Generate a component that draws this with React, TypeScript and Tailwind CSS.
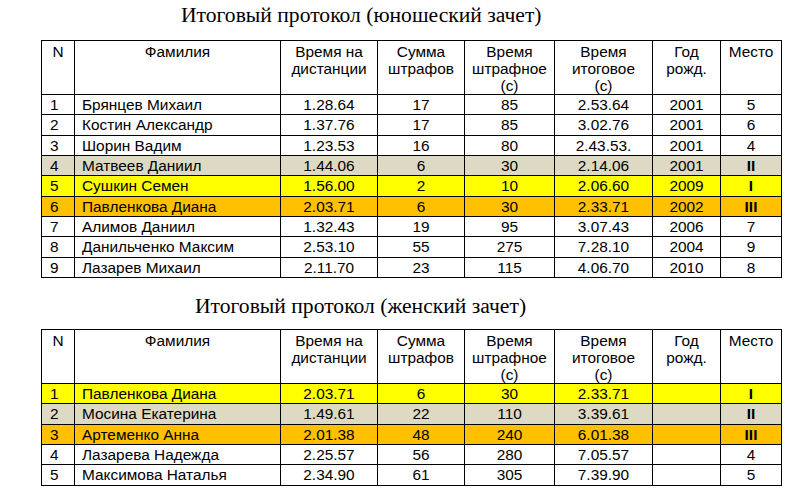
import React from "react";

type Row = {
  n: string;
  name: string;
  t: string;
  s: string;
  p: string;
  f: string;
  y: string;
  m: string;
  bg?: string;
  bold?: boolean;
};

const GRAY = "bg-[#ddd9c3]";
const YEL = "bg-[#ffff00]";
const ORG = "bg-[#ffc000]";

const boys: Row[] = [
  { n: "1", name: "Брянцев Михаил", t: "1.28.64", s: "17", p: "85", f: "2.53.64", y: "2001", m: "5" },
  { n: "2", name: "Костин Александр", t: "1.37.76", s: "17", p: "85", f: "3.02.76", y: "2001", m: "6" },
  { n: "3", name: "Шорин Вадим", t: "1.23.53", s: "16", p: "80", f: "2.43.53.", y: "2001", m: "4" },
  { n: "4", name: "Матвеев Даниил", t: "1.44.06", s: "6", p: "30", f: "2.14.06", y: "2001", m: "II", bg: GRAY, bold: true },
  { n: "5", name: "Сушкин Семен", t: "1.56.00", s: "2", p: "10", f: "2.06.60", y: "2009", m: "I", bg: YEL, bold: true },
  { n: "6", name: "Павленкова Диана", t: "2.03.71", s: "6", p: "30", f: "2.33.71", y: "2002", m: "III", bg: ORG, bold: true },
  { n: "7", name: "Алимов Даниил", t: "1.32.43", s: "19", p: "95", f: "3.07.43", y: "2006", m: "7" },
  { n: "8", name: "Данильченко Максим", t: "2.53.10", s: "55", p: "275", f: "7.28.10", y: "2004", m: "9" },
  { n: "9", name: "Лазарев Михаил", t: "2.11.70", s: "23", p: "115", f: "4.06.70", y: "2010", m: "8" },
];

const girls: Row[] = [
  { n: "1", name: "Павленкова Диана", t: "2.03.71", s: "6", p: "30", f: "2.33.71", y: "", m: "I", bg: YEL, bold: true },
  { n: "2", name: "Мосина Екатерина", t: "1.49.61", s: "22", p: "110", f: "3.39.61", y: "", m: "II", bg: GRAY, bold: true },
  { n: "3", name: "Артеменко Анна", t: "2.01.38", s: "48", p: "240", f: "6.01.38", y: "", m: "III", bg: ORG, bold: true },
  { n: "4", name: "Лазарева Надежда", t: "2.25.57", s: "56", p: "280", f: "7.05.57", y: "", m: "4" },
  { n: "5", name: "Максимова Наталья", t: "2.34.90", s: "61", p: "305", f: "7.39.90", y: "", m: "5" },
];

const cell = "border border-black p-0 align-middle leading-[19px] h-[20.33px] whitespace-nowrap";
const head = "border border-black align-top text-center p-0 pt-[2px] leading-[17px] font-normal";

function Protocol({ rows, headH }: { rows: Row[]; headH: string }) {
  return (
    <table className="ml-[41px] border-collapse table-fixed w-[740px] text-[15.4px] text-black" style={{ fontFamily: '"Liberation Sans", Arial, sans-serif' }}>
      <colgroup>
        <col className="w-[33px]" />
        <col className="w-[206px]" />
        <col className="w-[97px]" />
        <col className="w-[87px]" />
        <col className="w-[90px]" />
        <col className="w-[98px]" />
        <col className="w-[68px]" />
        <col className="w-[61px]" />
      </colgroup>
      <thead>
        <tr>
          <th className={`${head} ${headH}`}>N</th>
          <th className={`${head} ${headH}`}>Фамилия</th>
          <th className={`${head} ${headH}`}>Время на<br />дистанции</th>
          <th className={`${head} ${headH}`}>Сумма<br />штрафов</th>
          <th className={`${head} ${headH}`}>Время<br />штрафное<br />(c)</th>
          <th className={`${head} ${headH}`}>Время<br />итоговое<br />(c)</th>
          <th className={`${head} ${headH}`}>Год<br />рожд.</th>
          <th className={`${head} ${headH}`}>Место</th>
        </tr>
      </thead>
      <tbody>
        {rows.map((r) => (
          <tr key={r.n + r.name} className={r.bg ?? ""}>
            <td className={`${cell} pl-[8px] text-left`}>{r.n}</td>
            <td className={`${cell} pl-[7px] text-left`}>{r.name}</td>
            <td className={`${cell} text-center`}>{r.t}</td>
            <td className={`${cell} text-center`}>{r.s}</td>
            <td className={`${cell} text-center`}>{r.p}</td>
            <td className={`${cell} text-center`}>{r.f}</td>
            <td className={`${cell} text-center`}>{r.y}</td>
            <td className={`${cell} text-center ${r.bold ? "font-bold" : ""}`}>{r.m}</td>
          </tr>
        ))}
      </tbody>
    </table>
  );
}

export default function App() {
  return (
    <div className="w-[809px] h-[494px] bg-white overflow-hidden">
      <div
        className="h-[40px] pt-[3px] pl-[181px] text-[21.6px] leading-[24px] text-black"
        style={{ fontFamily: '"Liberation Serif", "Times New Roman", serif' }}
      >
        Итоговый протокол (юношеский зачет)
      </div>
      <Protocol rows={boys} headH="h-[53px]" />
      <div
        className="h-[51px] pt-[16px] pl-[195px] text-[21.6px] leading-[24px] text-black"
        style={{ fontFamily: '"Liberation Serif", "Times New Roman", serif' }}
      >
        Итоговый протокол (женский зачет)
      </div>
      <Protocol rows={girls} headH="h-[51px]" />
    </div>
  );
}
